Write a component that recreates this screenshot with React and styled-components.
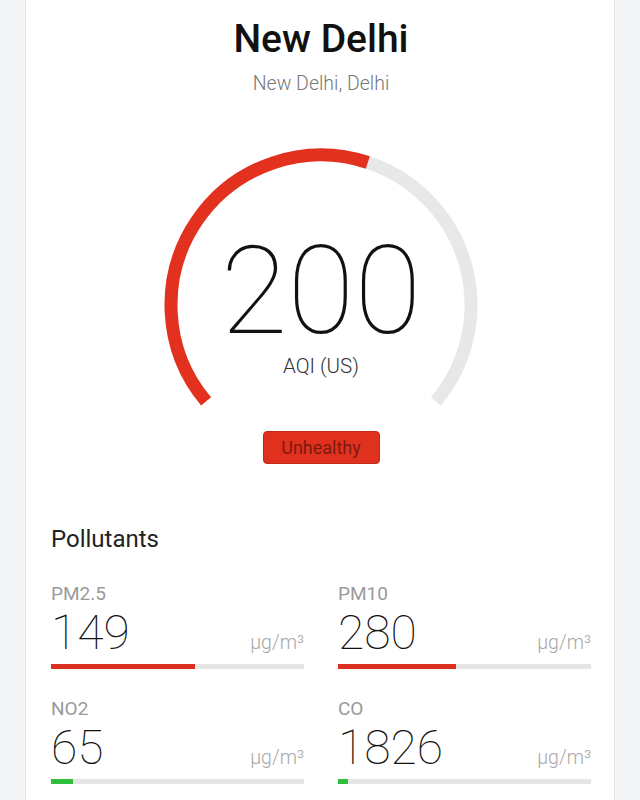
import React from 'react';
import styled, { createGlobalStyle } from 'styled-components';

const GlobalStyle = createGlobalStyle`
  body {
    margin: 0;
    background: #f4f5f7;
    font-family: Roboto, 'Liberation Sans', sans-serif;
  }
`;

const Card = styled.div`
  width: 590px;
  min-height: 800px;
  margin: 0 auto;
  box-sizing: border-box;
  background: #fff;
  border-left: 1px solid #e3e5e8;
  border-right: 1px solid #e3e5e8;
  padding: 20px 23px 40px 25px;
`;

const Header = styled.div`
  display: flex;
  flex-direction: column;
  align-items: center;
`;

const City = styled.h1`
  margin: 0;
  font-size: 39px;
  line-height: 1;
  font-weight: 500;
  color: #111;
`;

const Region = styled.div`
  margin-top: 15px;
  font-size: 19.5px;
  line-height: 1;
  font-weight: 300;
  color: #777;
`;

const Gauge = styled.div`
  position: relative;
  width: 320px;
  height: 270px;
  margin-top: 51px;
  padding-top: 86px;
  box-sizing: border-box;
  display: flex;
  flex-direction: column;
  align-items: center;
`;

const GaugeArc = styled.svg`
  position: absolute;
  left: 0;
  top: 0;
`;

const AqiValue = styled.div`
  position: relative;
  font-size: 122px;
  line-height: 1;
  font-weight: 100;
  color: #111;
`;

const AqiLabel = styled.div`
  position: relative;
  margin-top: 3px;
  font-size: 20.5px;
  line-height: 1;
  font-weight: 300;
  color: #333;
`;

const Badge = styled.div`
  margin-top: 16px;
  width: 117px;
  height: 33px;
  box-sizing: border-box;
  display: flex;
  align-items: center;
  justify-content: center;
  background: #e0311f;
  border: 1px solid #c42917;
  border-radius: 4px;
  color: #7c1a10;
  font-size: 18px;
  font-weight: 400;
`;

const SectionTitle = styled.h2`
  margin: 63px 0 0;
  font-size: 24px;
  line-height: 1;
  font-weight: 400;
  color: #222;
`;

const Grid = styled.div`
  margin-top: 33px;
  display: grid;
  grid-template-columns: 253px 253px;
  column-gap: 34px;
  row-gap: 30px;
`;

const Item = styled.div`
  display: flex;
  flex-direction: column;
`;

const ItemName = styled.div`
  font-size: 19px;
  line-height: 1;
  font-weight: 400;
  color: #9a9a9a;
`;

const ValueRow = styled.div`
  margin-top: 6px;
  display: flex;
  align-items: baseline;
  justify-content: space-between;
`;

const ItemValue = styled.div`
  font-size: 48px;
  line-height: 1;
  font-weight: 100;
  color: #111;
`;

const Unit = styled.div`
  font-size: 19.5px;
  font-weight: 300;
  color: #a8a8a8;
`;

const Track = styled.div`
  margin-top: 7px;
  height: 5px;
  background: #e6e6e6;
`;

const Fill = styled.div`
  height: 100%;
  background: ${(p) => p.$color};
`;

const RED = '#dc3020';
const GREEN = '#2fbf3a';

const pollutants = [
  { name: 'PM2.5', value: 149, pct: 57, color: RED },
  { name: 'PM10', value: 280, pct: 46.5, color: RED },
  { name: 'NO2', value: 65, pct: 8.5, color: GREEN },
  { name: 'CO', value: 1826, pct: 4, color: GREEN },
];

// gauge geometry, angles measured clockwise from the top
const cx = 160;
const cy = 160;
const r = 150;

const point = (deg) => {
  const a = (deg * Math.PI) / 180;
  return [cx + r * Math.sin(a), cy - r * Math.cos(a)];
};

const arc = (from, to) => {
  const [x1, y1] = point(from);
  const [x2, y2] = point(to);
  const large = to - from > 180 ? 1 : 0;
  return `M ${x1} ${y1} A ${r} ${r} 0 ${large} 1 ${x2} ${y2}`;
};

const App = () => {
  const start = -130;
  const end = 130;
  const fraction = 0.57;
  const split = start + (end - start) * fraction;

  return (
    <>
      <GlobalStyle />
      <Card>
        <Header>
          <City>New Delhi</City>
          <Region>New Delhi, Delhi</Region>
          <Gauge>
            <GaugeArc width='320' height='270' viewBox='0 0 320 270'>
              <path d={arc(split, end)} fill='none' stroke='#e8e8e8' strokeWidth='13' />
              <path d={arc(start, split)} fill='none' stroke='#e2321f' strokeWidth='13' />
            </GaugeArc>
            <AqiValue>200</AqiValue>
            <AqiLabel>AQI (US)</AqiLabel>
          </Gauge>
          <Badge>Unhealthy</Badge>
        </Header>

        <SectionTitle>Pollutants</SectionTitle>
        <Grid>
          {pollutants.map((p) => (
            <Item key={p.name}>
              <ItemName>{p.name}</ItemName>
              <ValueRow>
                <ItemValue>{p.value}</ItemValue>
                <Unit>µg/m³</Unit>
              </ValueRow>
              <Track>
                <Fill $color={p.color} style={{ width: `${p.pct}%` }} />
              </Track>
            </Item>
          ))}
        </Grid>
      </Card>
    </>
  );
};

export default App;
